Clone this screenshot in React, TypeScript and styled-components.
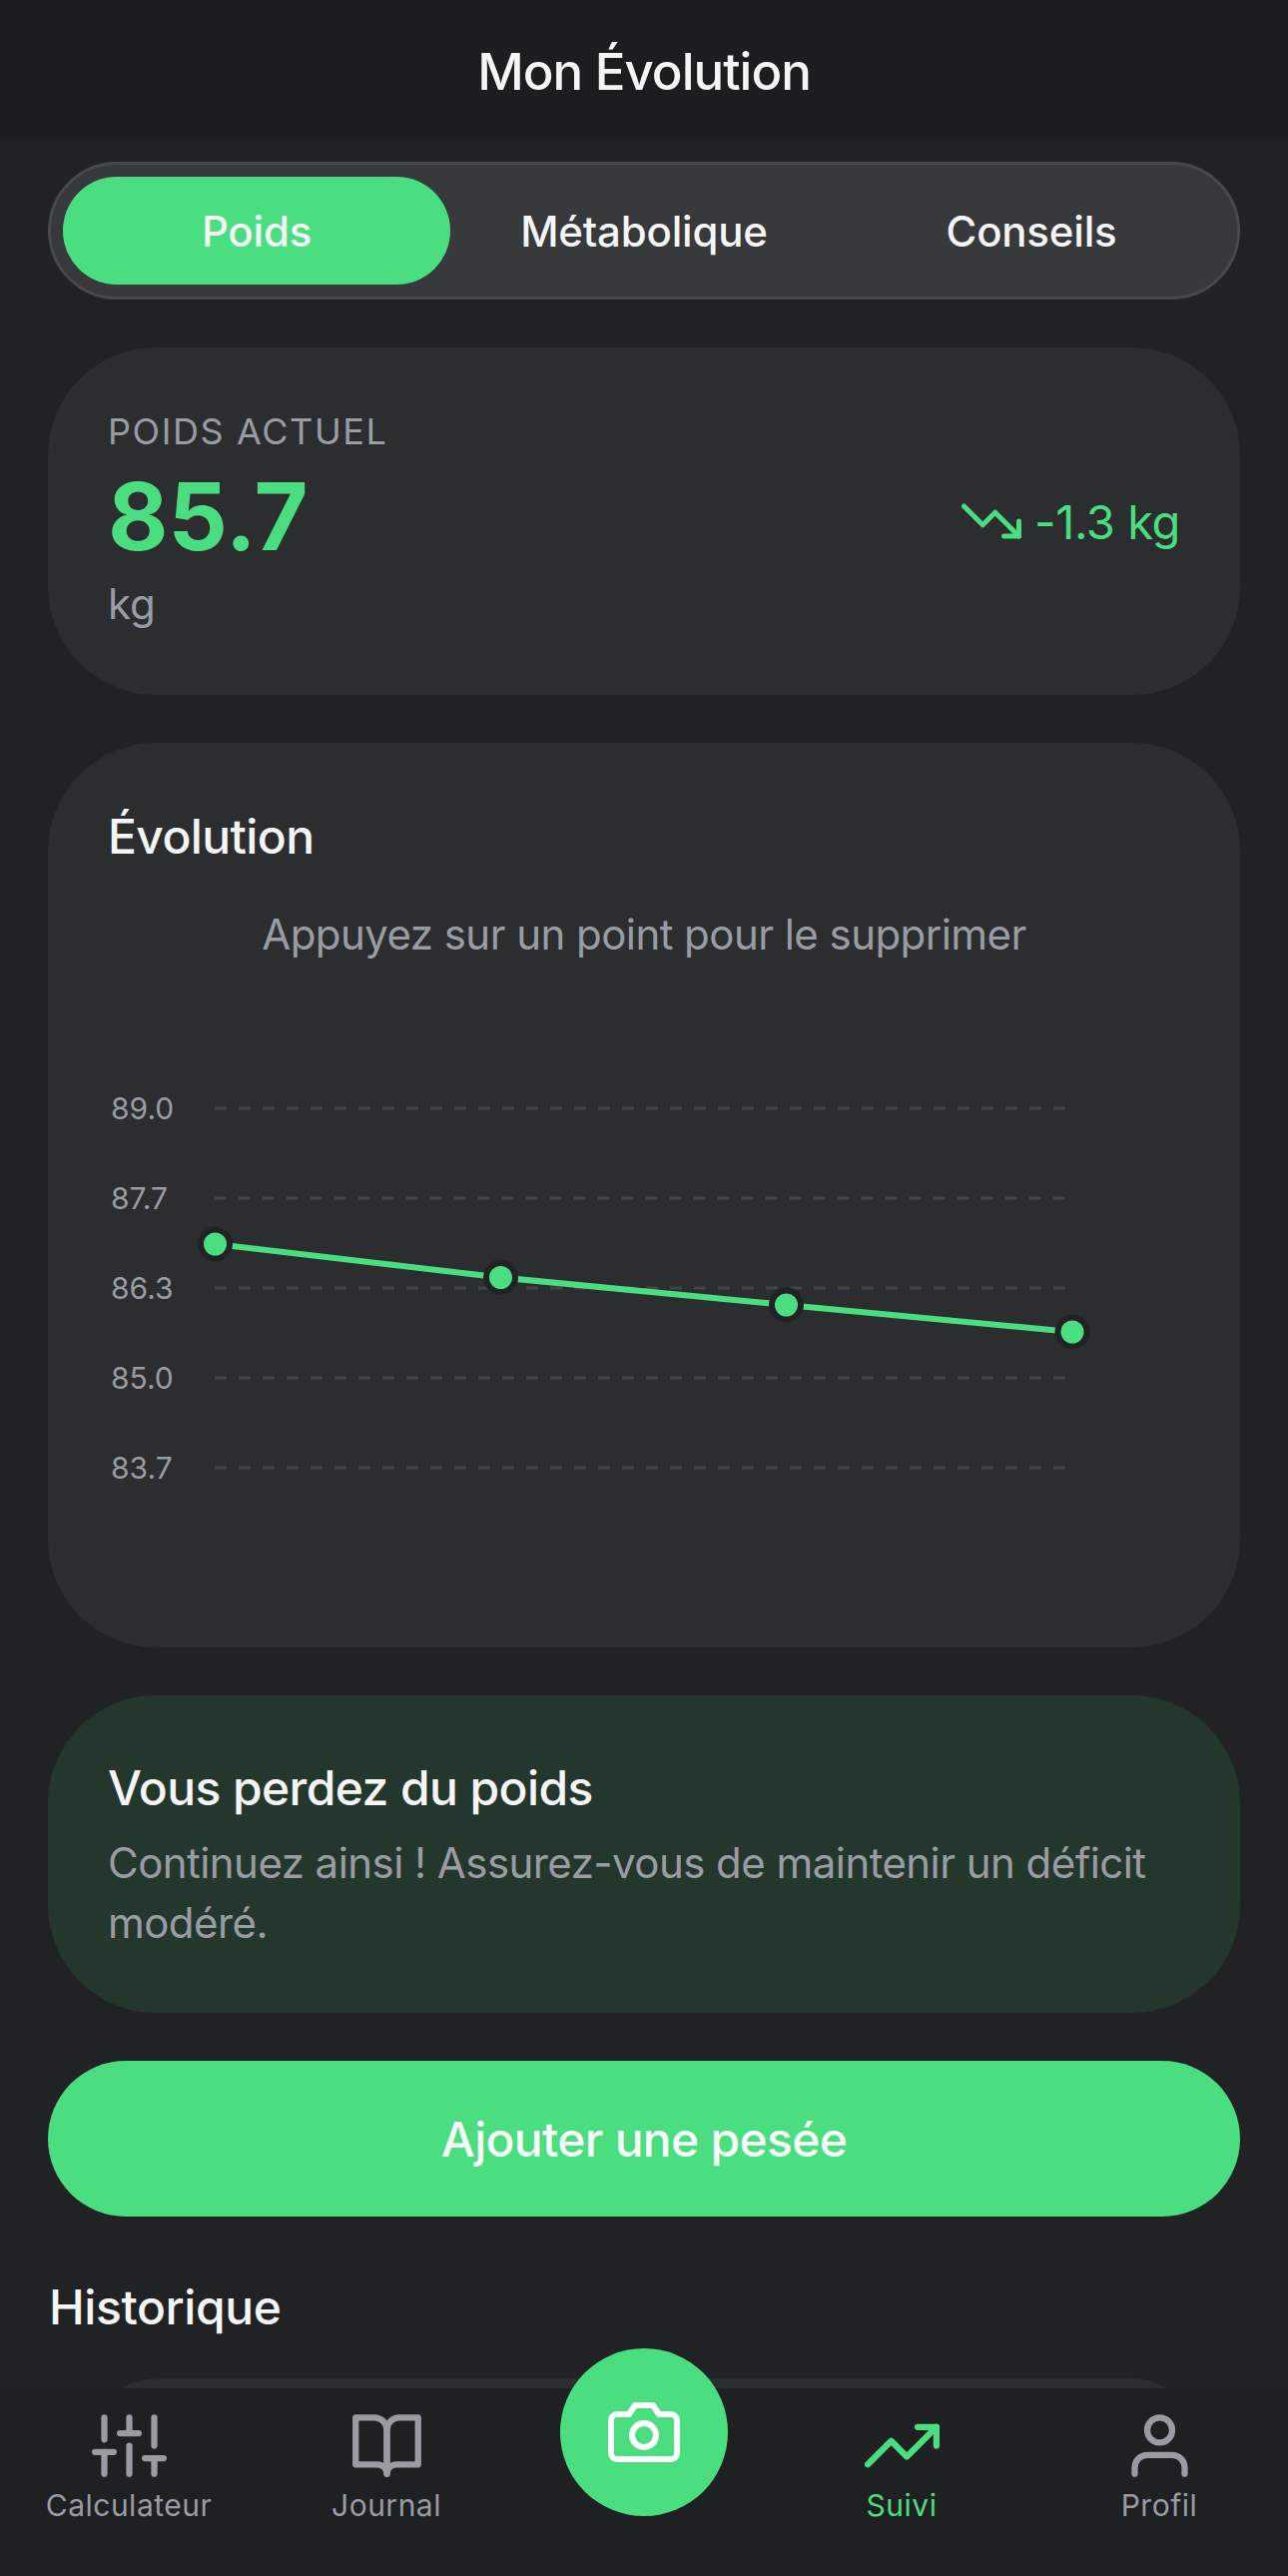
import React from "react";
import styled, { createGlobalStyle } from "styled-components";
import { FiBookOpen, FiCamera, FiSliders, FiTrendingDown, FiTrendingUp, FiUser } from "react-icons/fi";

const GREEN = "#4ade80";
const MUTED = "#9a9ca3";

const GlobalStyle = createGlobalStyle`
    html, body {
        margin: 0;
        padding: 0;
        background: #202224;
    }
    * {
        box-sizing: border-box;
    }
`;

/* ------------------------------ Styled UI ------------------------------- */
const Screen = styled.div`
    position: relative;
    width: 1290px;
    height: 2580px;
    overflow: hidden;
    background: #202224;
    font-family: "Inter", "Liberation Sans", sans-serif;
    color: #f5f5f6;
`;

const Header = styled.header`
    height: 138px;
    display: flex;
    align-items: center;
    justify-content: center;
    padding-top: 4px;
    background: #1c1d1f;
    font-size: 51px;
    font-weight: 550;
    letter-spacing: -1px;
`;

const Content = styled.main`
    display: flex;
    flex-direction: column;
    gap: 48px;
    padding: 24px 48px 0;
`;

const Tabs = styled.div`
    height: 138px;
    display: grid;
    grid-template-columns: repeat(3, 1fr);
    padding: 12px;
    background: #38393b;
    border: 3px solid #48494b;
    border-radius: 69px;
`;

const Tab = styled.div<{ $active?: boolean }>`
    display: flex;
    align-items: center;
    justify-content: center;
    border-radius: 54px;
    font-size: 42px;
    font-weight: 550;
    letter-spacing: -0.2px;
    background: ${({ $active }) => ($active ? GREEN : "transparent")};
`;

const Card = styled.section<{ $tint?: boolean }>`
    background: ${({ $tint }) => ($tint ? "#24372d" : "#2c2d2f")};
    border-radius: 108px;
    padding: 60px;
`;

const WeightCard = styled(Card)`
    height: 348px;
    display: flex;
    align-items: center;
    justify-content: space-between;
`;

const Eyebrow = styled.div`
    font-size: 36px;
    line-height: 44px;
    letter-spacing: 1.6px;
    color: ${MUTED};
`;

const BigValue = styled.div`
    margin-top: 7px;
    font-size: 93px;
    line-height: 112px;
    font-weight: 700;
    color: ${GREEN};
`;

const Unit = styled.div`
    font-size: 42px;
    line-height: 60px;
    margin-top: 2px;
    color: ${MUTED};
`;

const Delta = styled.div`
    display: flex;
    align-items: center;
    gap: 13px;
    font-size: 47px;
    letter-spacing: -0.4px;
    color: ${GREEN};
`;

const ChartCard = styled(Card)`
    height: 906px;
    padding-top: 64px;
`;

const CardTitle = styled.h2`
    margin: 0;
    font-size: 48px;
    line-height: 60px;
    font-weight: 550;
    letter-spacing: -0.6px;
`;

const Hint = styled.p`
    margin: 42px 0 0;
    text-align: center;
    font-size: 42px;
    line-height: 52px;
    letter-spacing: -0.55px;
    color: ${MUTED};
`;

const ChartSvg = styled.svg`
    display: block;
    margin: 38px 0 0 -60px;

    text {
        font-family: "Inter", "Liberation Sans", sans-serif;
        font-size: 30px;
        fill: ${MUTED};
    }
`;

const AdviceCard = styled(Card)`
    height: 318px;
    padding-top: 63px;
`;

const AdviceText = styled.p`
    margin: 15px 0 0;
    font-size: 42px;
    line-height: 60px;
    letter-spacing: -0.55px;
    color: ${MUTED};
`;

const AddButton = styled.button`
    all: unset;
    height: 156px;
    display: flex;
    align-items: center;
    justify-content: center;
    border-radius: 78px;
    background: ${GREEN};
    font-size: 48px;
    font-weight: 550;
    letter-spacing: -0.7px;
    color: #f8fbf9;
`;

const SectionTitle = styled.h2`
    margin: 13px 0 0 1px;
    font-size: 48px;
    line-height: 60px;
    font-weight: 550;
    letter-spacing: -0.4px;
`;

const HistoryCard = styled.div`
    height: 200px;
    margin: -7px 48px 0;
    background: #2c2d2f;
    border-radius: 60px;
`;

const BottomBar = styled.nav`
    position: absolute;
    left: 0;
    right: 0;
    bottom: 0;
    height: 188px;
    display: grid;
    grid-template-columns: repeat(5, 258px);
    background: #1f2022;
`;

const NavItem = styled.div<{ $active?: boolean }>`
    display: flex;
    flex-direction: column;
    align-items: center;
    padding-top: 20px;
    gap: 2px;
    font-size: 30px;
    line-height: 40px;
    letter-spacing: 0.5px;
    color: ${({ $active }) => ($active ? GREEN : MUTED)};
`;

const CameraButton = styled.div`
    position: absolute;
    left: 561px;
    bottom: 60px;
    width: 168px;
    height: 168px;
    display: flex;
    align-items: center;
    justify-content: center;
    border-radius: 50%;
    background: ${GREEN};
    color: #fff;
`;

const gridLines = [
    { y: 1110, label: "89.0" },
    { y: 1200, label: "87.7" },
    { y: 1290, label: "86.3" },
    { y: 1380, label: "85.0" },
    { y: 1470, label: "83.7" },
];

const points = [
    [215.5, 1246],
    [501.5, 1279.5],
    [787.5, 1307],
    [1074, 1334],
];

// viewBox uses screen coordinates so the chart numbers read like the design
const CHART_TOP = 1000;

const WeightChart: React.FC = () => (
    <ChartSvg width={1192} height={560} viewBox={`48 ${CHART_TOP} 1192 560`}>
        {gridLines.map((g) => (
            <g key={g.label}>
                <line x1={215} x2={1069} y1={g.y} y2={g.y} stroke="#434446" strokeWidth={3} strokeDasharray="12 12" />
                <text x={111} y={g.y + 11}>{g.label}</text>
            </g>
        ))}
        <polyline points={points.map((p) => p.join(",")).join(" ")} fill="none" stroke={GREEN} strokeWidth={6} />
        {points.map((p) => (
            <circle key={p[0]} cx={p[0]} cy={p[1]} r={14.5} fill={GREEN} stroke="#202224" strokeWidth={6} />
        ))}
    </ChartSvg>
);

const App: React.FC = () => (
    <Screen>
        <GlobalStyle />
        <Header>Mon Évolution</Header>
        <Content>
            <Tabs>
                <Tab $active>Poids</Tab>
                <Tab>Métabolique</Tab>
                <Tab>Conseils</Tab>
            </Tabs>
            <WeightCard>
                <div>
                    <Eyebrow>POIDS ACTUEL</Eyebrow>
                    <BigValue>85.7</BigValue>
                    <Unit>kg</Unit>
                </div>
                <Delta>
                    <FiTrendingDown size={60} />
                    -1.3 kg
                </Delta>
            </WeightCard>
            <ChartCard>
                <CardTitle>Évolution</CardTitle>
                <Hint>Appuyez sur un point pour le supprimer</Hint>
                <WeightChart />
            </ChartCard>
            <AdviceCard $tint>
                <CardTitle>Vous perdez du poids</CardTitle>
                <AdviceText>Continuez ainsi ! Assurez-vous de maintenir un déficit modéré.</AdviceText>
            </AdviceCard>
            <AddButton>Ajouter une pesée</AddButton>
            <SectionTitle>Historique</SectionTitle>
            <HistoryCard />
        </Content>
        <BottomBar>
            <NavItem><FiSliders size={75} />Calculateur</NavItem>
            <NavItem><FiBookOpen size={75} />Journal</NavItem>
            <NavItem />
            <NavItem $active><FiTrendingUp size={75} />Suivi</NavItem>
            <NavItem><FiUser size={75} />Profil</NavItem>
        </BottomBar>
        <CameraButton><FiCamera size={72} /></CameraButton>
    </Screen>
);

export default App;
